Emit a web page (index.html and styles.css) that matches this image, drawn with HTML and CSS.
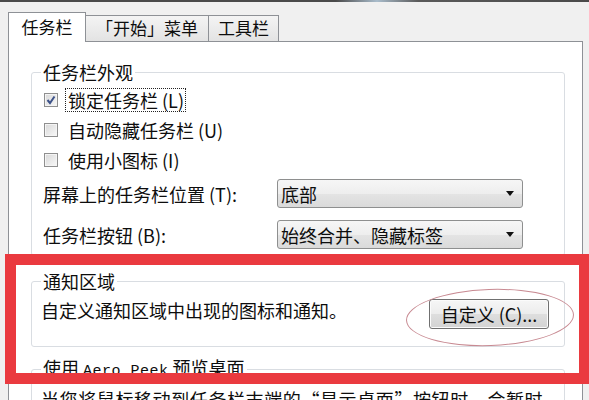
FILE: index.html
```html
<!DOCTYPE html>
<html lang="zh-CN">
<head>
    <meta charset="UTF-8">
    <meta name="viewport" content="width=device-width, initial-scale=1.0">
    <title>任务栏和「开始」菜单属性</title>
    <link rel="stylesheet" href="styles.css">
</head>
<body>
    <div class="edge"></div>
    <ul class="tabs">
        <li class="active">任务栏</li>
        <li>「开始」菜单</li>
        <li>工具栏</li>
    </ul>
    <div class="panel">
        <fieldset class="group">
            <legend>任务栏外观</legend>
            <label class="check">
                <span class="box">
                    <svg width="12" height="12" viewBox="0 0 12 12"><path d="M2.5 6 L5 9 L9.5 2.5" fill="none" stroke="#3d5289" stroke-width="2"/></svg>
                </span>
                <span class="text focus">锁定任务栏 (L)</span>
            </label>
            <label class="check">
                <span class="box"></span>
                <span class="text">自动隐藏任务栏 (U)</span>
            </label>
            <label class="check">
                <span class="box"></span>
                <span class="text">使用小图标 (I)</span>
            </label>
            <div class="field">
                <span class="name">屏幕上的任务栏位置 (T):</span>
                <div class="select">底部<i class="arrow"></i></div>
            </div>
            <div class="field second">
                <span class="name">任务栏按钮 (B):</span>
                <div class="select">始终合并、隐藏标签<i class="arrow"></i></div>
            </div>
        </fieldset>
        <fieldset class="group notify">
            <legend>通知区域</legend>
            <div class="notify-row">
                <p>自定义通知区域中出现的图标和通知。</p>
                <button>自定义 (C)...</button>
            </div>
        </fieldset>
        <fieldset class="group peek">
            <legend>使用 <span class="latin">Aero Peek</span> 预览桌面</legend>
            <p>当您将鼠标移动到任务栏末端的“显示桌面”按钮时，会暂时</p>
        </fieldset>
    </div>
    <!-- annotation drawn over the dialog -->
    <div class="mark"></div>
    <div class="circle"></div>
</body>
</html>
```

FILE: styles.css
```css
*{
    margin: 0;
    padding: 0;
    list-style: none;
    box-sizing: border-box;
}
body{
    width: 589px;
    height: 400px;
    overflow: hidden;
    background-color: #f0f0f0;
    font-family: "Noto Sans CJK SC", "Noto Sans", sans-serif;
    font-size: 18px;
    line-height: 22px;
    color: #0d0d0d;
}
.edge{
    height: 2px;
    background: linear-gradient(to right, #4a4a4a 0, #4a4a4a 57%, #a9bccb 64%, #5a5a5a 71%, #4a4a4a 100%);
}
.tabs{
    display: flex;
    align-items: flex-end;
    height: 29px;
    margin-top: 10px;
    padding-left: 8px;
    font-size: 17px;
}
.tabs li{
    height: 26px;
    line-height: 24px;
    text-align: center;
    border: 1px solid #8e9196;
    border-bottom: none;
    background: linear-gradient(#f4f4f4, #e3e3e3);
    margin-left: -1px;
}
.tabs li:nth-child(2){
    width: 124px;
}
.tabs li:nth-child(3){
    width: 71px;
}
.tabs .active{
    position: relative;
    z-index: 1;
    width: 78px;
    height: 30px;
    line-height: 28px;
    margin-left: 0;
    margin-bottom: -1px;
    background: #fff;
}
.panel{
    height: 400px;
    margin: 0 6px 0 8px;
    padding: 19px 17px 0 22px;
    border: 1px solid #8e9196;
    border-bottom: none;
    background-color: #fff;
}
.group{
    border: 1px solid #d9dde2;
    border-radius: 3px;
    padding: 0 9px 6px 9px;
}
.group legend{
    padding: 0 2px;
}
.check{
    display: flex;
    align-items: center;
    height: 30px;
    margin-left: 3px;
}
.check:first-of-type{
    margin-top: 2px;
}
.check .box{
    display: flex;
    align-items: center;
    justify-content: center;
    width: 14px;
    height: 14px;
    margin-right: 8px;
    border: 1px solid #8f8f8f;
    background: linear-gradient(135deg, #d8d8d8, #f8f8f8);
    box-shadow: inset 0 0 0 1px #f4f4f4;
}
.check .text{
    padding: 0 1px 0 2px;
}
.check .focus{
    outline: 1px dotted #222;
}
.field{
    display: flex;
    align-items: center;
    margin-top: 4px;
}
.field.second{
    margin-top: 12px;
}
.field .name{
    width: 236px;
    padding-left: 2px;
}
.select{
    display: flex;
    align-items: center;
    justify-content: space-between;
    width: 246px;
    height: 29px;
    padding: 0 8px 0 3px;
    border: 1px solid #8e8f8f;
    border-radius: 3px;
    background: linear-gradient(#f6f6f6 0, #eeeeee 50%, #e4e4e4 51%, #dadada 100%);
}
.select .arrow{
    width: 0;
    height: 0;
    border-left: 4px solid transparent;
    border-right: 4px solid transparent;
    border-top: 5px solid #111;
}
.notify{
    margin-top: 14px;
    padding-bottom: 17px;
}
.notify-row{
    display: flex;
    justify-content: space-between;
    align-items: flex-start;
    margin-top: 7px;
}
.notify-row button{
    width: 120px;
    height: 30px;
    margin-right: 6px;
    font: inherit;
    color: #0d0d0d;
    border: 1px solid #707070;
    border-radius: 3px;
    background: linear-gradient(#f6f6f6 0, #ececec 50%, #dedede 51%, #d3d3d3 100%);
    box-shadow: inset 0 0 0 1px #fbfbfb;
}
.peek{
    margin-top: 9px;
}
.peek .latin{
    font-family: "Liberation Mono", monospace;
    font-size: 15px;
    letter-spacing: 0.5px;
}
.peek p{
    margin-top: 5px;
    letter-spacing: 0.6px;
    white-space: nowrap;
}
.mark{
    position: absolute;
    left: 5px;
    top: 254px;
    width: 585px;
    height: 130px;
    border: 11px solid #ea3a3f;
}
.circle{
    position: absolute;
    left: 406px;
    top: 289px;
    width: 168px;
    height: 57px;
    border: 1.5px solid #c88a92;
    border-radius: 50%;
    transform: rotate(-2deg);
}
```
